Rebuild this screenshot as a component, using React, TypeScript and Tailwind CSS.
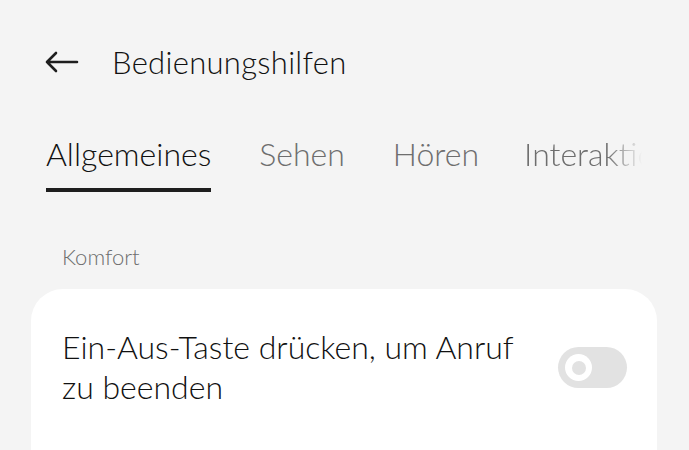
export default function App() {
  const font = { fontFamily: "Lato, 'Noto Sans', sans-serif" };
  return (
    <div className="w-[689px] h-[450px] overflow-hidden bg-[#f4f4f4] text-[#111] font-light" style={font}>
      {/* header */}
      <div className="flex items-center h-[64px] mt-[30px] pl-[45px]">
        <svg width="34" height="22" viewBox="0 0 34 22" fill="none" stroke="#1e1e1e" strokeWidth="2.6" strokeLinecap="round" strokeLinejoin="round">
          <path d="M32 11H2M11 2L2 11l9 9" />
        </svg>
        <h1 className="ml-[33px] text-[31px] leading-none tracking-[0.3px]">Bedienungshilfen</h1>
      </div>

      {/* tabs */}
      <div className="relative flex gap-12 pl-[46px] mt-[40px] whitespace-nowrap">
        <div className="flex flex-col">
          <span className="text-[32px] leading-[40px] text-[#111]">Allgemeines</span>
          <div className="mt-[14px] h-[4px] bg-[#1e1e1e]" />
        </div>
        <span className="text-[32px] leading-[40px] text-[#6e6e6e]">Sehen</span>
        <span className="text-[32px] leading-[40px] text-[#6e6e6e]">Hören</span>
        <span className="-ml-[3px] text-[32px] leading-[40px] text-[#6e6e6e] [mask-image:linear-gradient(to_right,black_70%,transparent_100%)] w-[118px] overflow-hidden">
          Interaktion
        </span>
      </div>

      {/* section */}
      <div className="pl-[62px] mt-[54px] text-[22px] leading-none text-[#6e6e6e]">Komfort</div>

      <div className="mt-[21px] ml-[31px] w-[626px] h-[200px] bg-white rounded-[32px] px-[31px] pt-[38px] flex items-start justify-between">
        <p className="text-[32px] leading-[40px] w-[470px]">
          Ein-Aus-Taste drücken, um Anruf zu beenden
        </p>
        <div className="mt-[20px] mr-[-1px] w-[69px] h-[41px] rounded-full bg-[#e2e2e2] flex items-center pl-[7px]">
          <div className="w-[27px] h-[27px] rounded-full bg-white flex items-center justify-center">
            <div className="w-[14px] h-[14px] rounded-full bg-[#e2e2e2]" />
          </div>
        </div>
      </div>
    </div>
  );
}
